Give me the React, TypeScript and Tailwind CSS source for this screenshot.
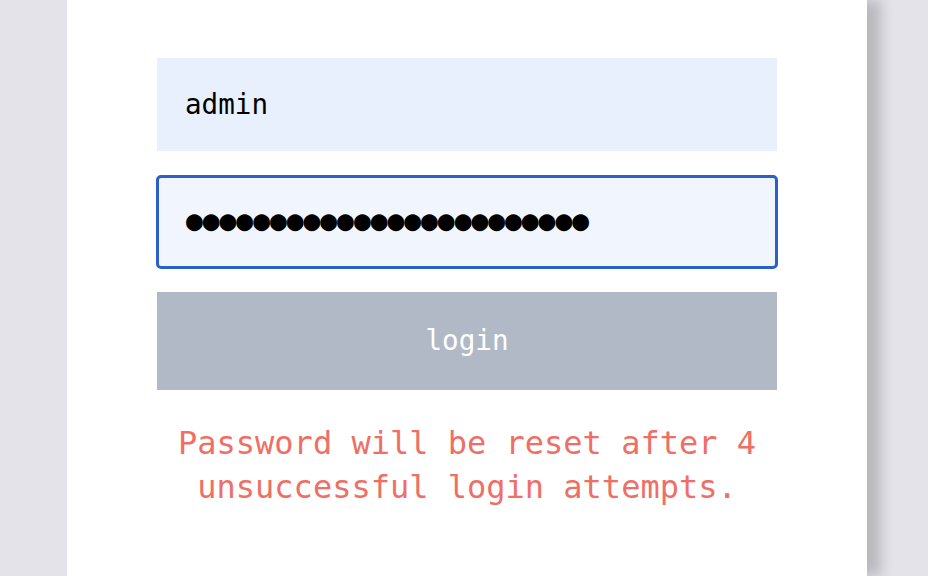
const mono = { fontFamily: '"DejaVu Sans Mono", "Liberation Mono", monospace' };

export default function App() {
  const dots = "●".repeat(24);

  return (
    <div
      className="w-[928px] h-[576px] overflow-hidden bg-[#e4e3e9] pl-[67px] font-['DejaVu_Sans_Mono','Liberation_Mono',monospace]"
      style={mono}
    >
      <div className="w-[800px] h-full bg-white px-[90px] pt-[58px] shadow-[14px_0_12px_rgba(0,0,0,0.19)]">
        <div className="flex flex-col">
          <div className="h-[93px] bg-[#e8f0fd] flex items-center pl-[28px] text-[27.6px] text-black">
            admin
          </div>

          <div className="mt-[24px] -mx-px h-[94px] rounded-[5px] border-[3px] border-[#2a60c7] bg-[#f1f5fd] flex items-center pl-[27px] pb-[2px] text-[27.9px] text-black leading-none">
            {dots}
          </div>

          <button className="mt-[23px] h-[98px] w-full bg-[#b2b9c6] text-white text-[27.6px] flex items-center justify-center">
            login
          </button>

          <p className="mt-[31px] text-center text-[32px] leading-[44px] text-[#ef6f66]">
            Password will be reset after 4
            <br />
            unsuccessful login attempts.
          </p>
        </div>
      </div>
    </div>
  );
}
